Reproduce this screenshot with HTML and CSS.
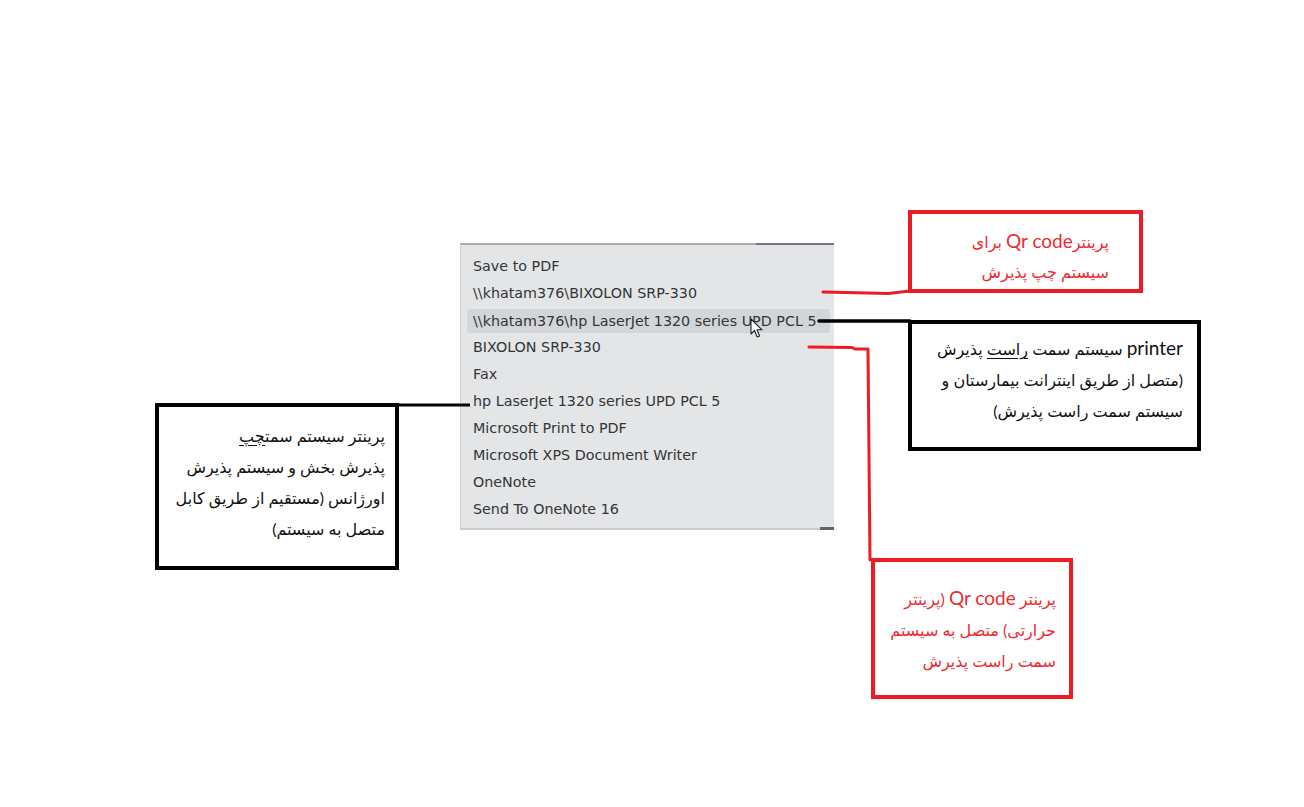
FILE: index.html
```html
<!DOCTYPE html>
<html lang="fa">
<head>
<meta charset="utf-8">
<title>Printers</title>
<link rel="stylesheet" href="styles.css">
</head>
<body>
<div class="canvas">
  <div class="menu" dir="ltr">
    <div class="item">Save to PDF</div>
    <div class="item">\\khatam376\BIXOLON SRP-330</div>
    <div class="item active">\\khatam376\hp LaserJet 1320 series UPD PCL 5</div>
    <div class="item">BIXOLON SRP-330</div>
    <div class="item">Fax</div>
    <div class="item">hp LaserJet 1320 series UPD PCL 5</div>
    <div class="item">Microsoft Print to PDF</div>
    <div class="item">Microsoft XPS Document Writer</div>
    <div class="item">OneNote</div>
    <div class="item">Send To OneNote 16</div>
    <span class="menu-corner"></span>
  </div>

  <svg class="cursor" width="14" height="22" viewBox="0 0 14 22">
    <path d="M1 1 L1 16 L4.5 12.5 L7.2 19 L9.6 18 L7 11.8 L12 11.8 Z" fill="#fff" stroke="#222" stroke-width="1.1" stroke-linejoin="round"/>
  </svg>

  <svg class="wires" width="1304" height="807" viewBox="0 0 1304 807">
    <polyline points="823,292 846,292.5 888,293.5 910,291" fill="none" stroke="#ed1c24" stroke-width="3" stroke-linecap="round"/>
    <line x1="819" y1="321" x2="910" y2="321" stroke="#000" stroke-width="3.5" stroke-linecap="round"/>
    <polyline points="809,347 852,347.5 855,349 868,349 870,560" fill="none" stroke="#ed1c24" stroke-width="3" stroke-linecap="round" stroke-linejoin="round"/>
    <line x1="396" y1="405" x2="470" y2="405" stroke="#000" stroke-width="3"/>
  </svg>

  <div class="note note-red note-a" dir="rtl">
    <p>پرینتر<span class="lat">Qr code</span> برای<br>سیستم چپ پذیرش</p>
  </div>

  <div class="note note-black note-b" dir="rtl">
    <p><span class="lat">printer</span> سیستم سمت <u>راست</u> پذیرش<br>(متصل از طریق اینترانت بیمارستان و<br>سیستم سمت راست پذیرش)</p>
  </div>

  <div class="note note-black note-c" dir="rtl">
    <p>پرینتر سیستم سمت<u>چپ</u><br>پذیرش بخش و سیستم پذیرش<br>اورژانس (مستقیم از طریق کابل<br>متصل به سیستم)</p>
  </div>

  <div class="note note-red note-d" dir="rtl">
    <p>پرینتر <span class="lat">Qr code</span> (پرینتر<br>حرارتی) متصل به سیستم<br>سمت راست پذیرش</p>
  </div>
</div>
</body>
</html>
```

FILE: styles.css
```css
html, body {
  margin: 0;
  padding: 0;
  background: #ffffff;
}

.canvas {
  position: relative;
  width: 1304px;
  height: 807px;
  overflow: hidden;
  background: #ffffff;
}

/* Windows-like printer drop-down */
.menu {
  position: absolute;
  left: 460px;
  top: 243px;
  width: 374px;
  height: 287px;
  box-sizing: border-box;
  padding: 8px 4px 7px 6px;
  background: #e3e5e7;
  border-top: 2px solid #a9acaf;
  border-left: 1px solid #cfd1d3;
  border-bottom: 2px solid #c9cbcd;
  font-family: "DejaVu Sans", Verdana, sans-serif;
  font-size: 14.3px;
  color: #333537;
}

.menu::before {
  content: "";
  position: absolute;
  top: -2px;
  left: 295px;
  right: 0;
  height: 2px;
  background: #74787c;
}

.menu-corner {
  position: absolute;
  right: 0;
  bottom: -2px;
  width: 14px;
  height: 3px;
  background: #5d6470;
}

.item {
  height: 27px;
  line-height: 27px;
  padding-left: 6px;
  white-space: nowrap;
}

.item.active {
  height: 24px;
  line-height: 24px;
  margin: 1.5px 0;
  background: #d3d6d9;
  border-radius: 3px;
}

.cursor {
  position: absolute;
  left: 750px;
  top: 318px;
}

.wires {
  position: absolute;
  left: 0;
  top: 0;
  pointer-events: none;
}

/* Callout boxes */
.note {
  position: absolute;
  box-sizing: border-box;
  border: 4px solid #000;
  background: #ffffff;
  font-family: Lato, "DejaVu Sans", sans-serif;
  font-size: 16px;
  line-height: 31px;
  text-align: right;
}

.note p {
  margin: 0;
}

.note .lat {
  font-size: 19px;
}

.note u {
  text-underline-offset: 3px;
}

.note-red {
  border-color: #ed1c24;
  color: #ee2a31;
}

.note-black {
  border-color: #000000;
  color: #111111;
}

.note-a {
  left: 908px;
  top: 210px;
  width: 235px;
  height: 83px;
  padding: 12px 30px 0 0;
  line-height: 30px;
}

.note-b {
  left: 908px;
  top: 320px;
  width: 293px;
  height: 131px;
  padding: 8px 14px 0 0;
  line-height: 31px;
}

.note-c {
  left: 155px;
  top: 403px;
  width: 244px;
  height: 167px;
  padding: 13px 10px 0 0;
}

.note-d {
  left: 871px;
  top: 558px;
  width: 202px;
  height: 141px;
  padding: 20px 13px 0 0;
}
```
